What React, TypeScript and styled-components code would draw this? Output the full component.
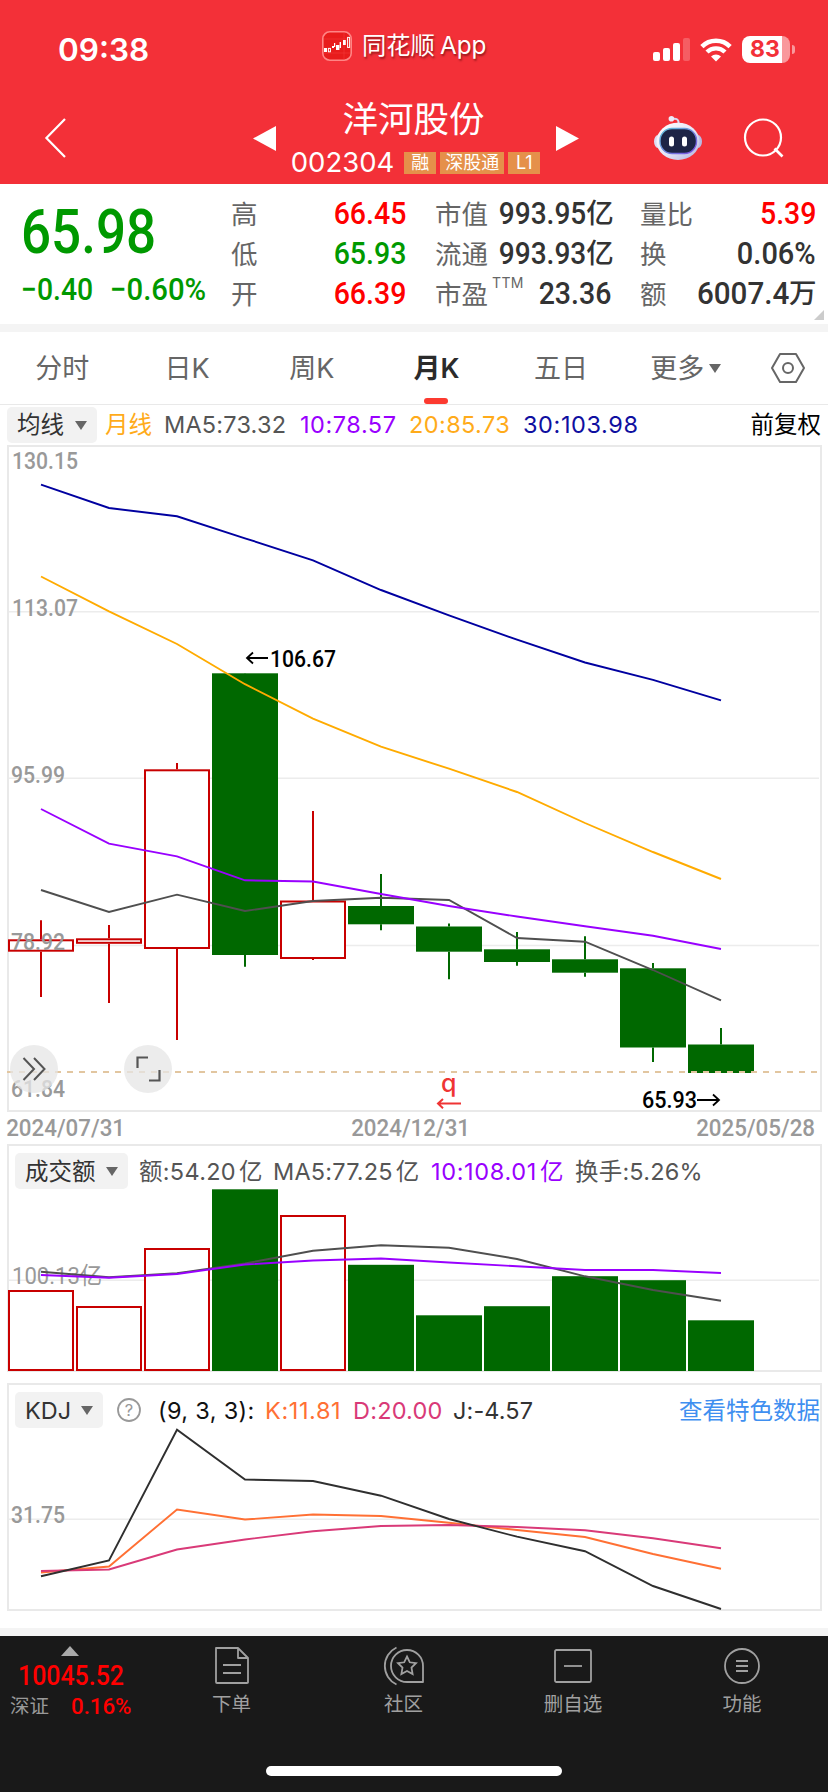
import React from 'react';
import styled, { createGlobalStyle } from 'styled-components';

const CJK = '"Noto Sans CJK SC"';
const SANS = `Inter, ${CJK}, sans-serif`;
const NUM = `Roboto, ${CJK}, sans-serif`;

const Global = createGlobalStyle`
  html, body { margin: 0; padding: 0; background: #fff; }
  * { box-sizing: border-box; }
  svg { display: block; overflow: visible; }
`;

const Page = styled.div`
  width: 828px;
  height: 1792px;
  display: flex;
  flex-direction: column;
  font-family: ${SANS};
  line-height: 1;
  white-space: nowrap;
  background: #fff;
  overflow: hidden;
`;

/* Narrow numeric face used for every quote figure */
const Figure = styled.span<{ $size: number; $color?: string; $weight?: number; $origin?: string; $scale?: number }>`
  display: inline-block;
  font-family: ${NUM};
  font-size: ${p => p.$size}px;
  font-weight: ${p => p.$weight ?? 500};
  color: ${p => p.$color ?? '#333'};
  transform: scaleX(${p => p.$scale ?? 0.905});
  transform-origin: ${p => p.$origin ?? 'right'} center;
`;

/* ---------- header ---------- */
const Header = styled.header`
  height: 184px;
  flex: none;
  background: #f33038;
  color: #fff;
`;
const StatusBar = styled.div`
  height: 92px;
  display: grid;
  grid-template-columns: 322px 331px 1fr;
  align-items: center;
  padding-top: 7px;
`;
const Clock = styled.div`
  padding-left: 58px;
  font-size: 31.5px;
  font-weight: 600;
`;
const AppName = styled.div`
  display: flex;
  align-items: center;
  gap: 10px;
  margin-top: -8px;
  font-size: 24.3px;
  text-shadow: 1px 2px 2px rgba(60, 0, 0, 0.5);
`;
const AppWord = styled.span`
  margin-left: 5px;
`;
const StatusIcons = styled.div`
  display: flex;
  align-items: center;
  gap: 10px;
`;
const Battery = styled.div`
  display: flex;
  align-items: center;
  gap: 2px;
`;
const BatteryBody = styled.div`
  width: 48px;
  height: 27px;
  border-radius: 8px;
  background: linear-gradient(90deg, #fff 40px, rgba(255, 255, 255, 0.5) 40px);
  color: #f33038;
  font-size: 23px;
  font-weight: 700;
  line-height: 27px;
  padding-left: 8px;
`;
const BatteryNub = styled.div`
  width: 3px;
  height: 9px;
  border-radius: 0 3px 3px 0;
  background: rgba(255, 255, 255, 0.5);
`;
const NavBar = styled.div`
  height: 92px;
  display: grid;
  grid-template-columns: 253px 24px 278px 99px 128px;
  align-items: center;
`;
const BackSlot = styled.div`
  padding-left: 45px;
`;
const StockTitle = styled.div`
  display: flex;
  flex-direction: column;
  align-items: center;
  padding-right: 1px;
`;
const StockName = styled.div`
  font-size: 35.5px;
  line-height: 46px;
  padding-right: 4px;
  margin: 3px 0 -1px;
`;
const StockMeta = styled.div`
  display: flex;
  align-items: center;
  height: 40px;
  gap: 4px;
`;
const Code = styled.span`
  font-size: 27.5px;
  margin: 1px 6px 0 0;
`;
const Badge = styled.span<{ $w: number }>`
  width: ${p => p.$w}px;
  height: 22px;
  margin-top: 1px;
  background: #e5904a;
  font-size: 18px;
  line-height: 22px;
  text-align: center;
`;
const NavActions = styled.div`
  display: flex;
  align-items: center;
  gap: 41px;
`;

/* ---------- quote ---------- */
const Quote = styled.section`
  position: relative;
  height: 140px;
  flex: none;
  display: grid;
  grid-template-columns: 202px 175px 176px 176px;
  column-gap: 29px;
`;
const PriceBlock = styled.div`
  padding-left: 21px;
`;
const Price = styled.div`
  height: 93px;
  display: flex;
  align-items: center;
  padding-top: 5px;
`;
const Changes = styled.div`
  display: flex;
  align-items: center;
  height: 24px;
  gap: 10px;
`;
const StatColumn = styled.div`
  padding-top: 10px;
`;
const StatRow = styled.div`
  height: 40px;
  display: flex;
  align-items: center;
  justify-content: space-between;
`;
const StatLabel = styled.span`
  font-size: 26.5px;
  color: #666;
  margin-top: 1px;
  display: flex;
`;
const Ttm = styled.sup`
  font-size: 14px;
  line-height: 1;
  letter-spacing: 0.4px;
  margin: -5px 0 0 4px;
`;
const StatValue = styled.span`
  display: flex;
  align-items: center;
`;
const Unit = styled.span`
  font-size: 27.5px;
  font-weight: 500;
  color: #333;
  letter-spacing: -0.5px;
`;
const Corner = styled.i`
  position: absolute;
  right: 4px;
  bottom: 4px;
  border: 5px solid #ccc;
  border-top-color: transparent;
  border-left-color: transparent;
`;
const Strip = styled.div`
  height: 8px;
  flex: none;
  background: #f4f4f4;
`;

/* ---------- tabs ---------- */
const Tabs = styled.nav`
  height: 73px;
  flex: none;
  display: flex;
  border-bottom: 1px solid #e9e9e9;
`;
const Tab = styled.div<{ $on?: boolean }>`
  position: relative;
  width: 124.7px;
  height: 72px;
  display: flex;
  align-items: center;
  justify-content: center;
  gap: 5px;
  font-size: 27px;
  color: ${p => (p.$on ? '#2b2b2b' : '#666')};
  font-weight: ${p => (p.$on ? 600 : 400)};
  &::after {
    content: '';
    display: ${p => (p.$on ? 'block' : 'none')};
    position: absolute;
    left: 50%;
    bottom: 0;
    width: 24px;
    height: 6px;
    margin-left: -12px;
    border-radius: 3px;
    background: #fc3a30;
  }
`;
const SettingsTab = styled.div`
  flex: 1;
  height: 72px;
  display: flex;
  align-items: center;
  justify-content: center;
`;
const Caret = styled.i`
  width: 0;
  height: 0;
  border: 6px solid transparent;
  border-top: 9px solid #666;
  border-bottom: 0;
`;

/* ---------- indicator rows ---------- */
const Legend = styled.div<{ $h: number; $pl: number; $pr?: number; $pt?: number; $drop?: number }>`
  height: ${p => p.$h}px;
  flex: none;
  display: flex;
  align-items: center;
  padding: ${p => p.$pt ?? 0}px ${p => p.$pr ?? 0}px 0 ${p => p.$pl}px;
  font-size: 23.5px;
  & > :not(svg) { padding-top: ${p => p.$drop ?? 0}px; }
`;
const Picker = styled.div<{ $w: number }>`
  width: ${p => p.$w}px;
  height: 36px;
  border-radius: 5px;
  background: #f2f2f2;
  color: #333;
  display: flex;
  align-items: center;
  justify-content: space-between;
  padding: 0 10px;
  flex: none;
`;
const Item = styled.span<{ $c: string; $ml?: number; $w?: number; $ls?: number }>`
  color: ${p => p.$c};
  margin-left: ${p => p.$ml ?? 0}px;
  width: ${p => (p.$w ? p.$w + 'px' : 'auto')};
  letter-spacing: ${p => p.$ls ?? 0}px;
  flex: none;
`;
const Yi = styled.span`
  margin-left: 3px;
`;
const Push = styled.span`
  margin-left: auto;
  color: #000;
  font-size: 23.5px;
`;
const Link = styled(Push)`
  color: #3f8ff0;
`;

/* ---------- panels ---------- */
const Panel = styled.section<{ $h: number }>`
  position: relative;
  width: 815px;
  height: ${p => p.$h}px;
  flex: none;
  margin-left: 7px;
  border: 2px solid #e9e9e9;
`;
const Dates = styled.div`
  height: 32px;
  flex: none;
  display: flex;
  align-items: center;
  justify-content: space-between;
  padding: 2px 14px 0 7px;
`;
const DateText = styled.span`
  width: 117px;
  display: flex;
  justify-content: center;
`;
const Gap = styled.div<{ $h: number }>`
  height: ${p => p.$h}px;
  flex: none;
`;
const FloatButtons = styled.div`
  position: absolute;
  left: 1px;
  bottom: 17px;
  display: flex;
  gap: 66px;
`;
const RoundButton = styled.div`
  width: 48px;
  height: 48px;
  border-radius: 50%;
  background: rgba(230, 230, 230, 0.76);
  display: flex;
  align-items: center;
  justify-content: center;
`;

/* ---------- bottom bar ---------- */
const Bottom = styled.footer`
  height: 156px;
  flex: none;
  background: #191919;
  display: flex;
  flex-direction: column;
  align-items: center;
`;
const BottomRow = styled.div`
  width: 828px;
  height: 130px;
  display: grid;
  grid-template-columns: 146px 171px 173px 166px 172px;
`;
const IndexBox = styled.div`
  display: flex;
  flex-direction: column;
  padding-top: 10px;
`;
const UpMark = styled.i`
  width: 0;
  margin-left: 61px;
  border: 9px solid transparent;
  border-bottom: 10px solid #aaa;
  border-top: 0;
`;
const IndexValue = styled.div`
  height: 39px;
  display: flex;
  align-items: center;
  padding-left: 18px;
`;
const IndexMeta = styled.div`
  display: flex;
  align-items: center;
  height: 24px;
  padding-left: 10px;
  gap: 22px;
  font-size: 19.5px;
  color: #999;
`;
const Action = styled.div`
  display: flex;
  flex-direction: column;
  align-items: center;
  padding-top: 10px;
  gap: 9px;
  font-size: 19.5px;
  color: #a0a0a0;
`;
const HomeBar = styled.div`
  width: 296px;
  height: 10px;
  border-radius: 5px;
  background: #fff;
`;

/* ---------- data ---------- */
const STEP = 68;
const cx = (i: number) => 41 + STEP * i;
const line = (ys: number[]) => ys.map((y, i) => `${cx(i)},${y}`).join(' ');

type Candle = { up?: boolean; hi: number; lo: number; top: number; bottom: number };
const candles: Candle[] = [
  { up: true, hi: 920.3, lo: 997, top: 939.3, bottom: 951.7 },
  { up: true, hi: 925, lo: 1003, top: 938.3, bottom: 943.8 },
  { up: true, hi: 763, lo: 1040, top: 769.3, bottom: 949 },
  { hi: 673, lo: 966.7, top: 673.3, bottom: 955 },
  { up: true, hi: 811, lo: 960, top: 900.5, bottom: 959 },
  { hi: 874, lo: 930.3, top: 906, bottom: 924.3 },
  { hi: 923.5, lo: 979.3, top: 926.5, bottom: 951.7 },
  { hi: 932, lo: 965.7, top: 949.3, bottom: 962 },
  { hi: 936.3, lo: 976.7, top: 959.3, bottom: 972.7 },
  { hi: 963, lo: 1062, top: 968.3, bottom: 1047.5 },
  { hi: 1028, lo: 1045, top: 1044.5, bottom: 1073 },
];
const volumes = [1290, 1306, 1248, 1189.3, 1215, 1264.8, 1315.3, 1306.2, 1276.2, 1280.2, 1320.3];

const ma30 = [484.7, 508, 516.3, 538.3, 560.3, 590, 615.3, 639.7, 662.5, 679.8, 700.3];
const ma20 = [576.5, 611.3, 644, 684.2, 718.7, 746.7, 768.7, 792, 823, 852, 879];
const ma10 = [809, 843.7, 856.3, 880.3, 881.5, 894, 906, 916.5, 926.3, 935.7, 949];
const ma5 = [890, 912, 894.7, 911, 901, 897.7, 900, 938, 941.7, 970, 1000.3];
const vol5 = [1271.7, 1277.3, 1273.3, 1263.5, 1250.7, 1245.3, 1247.7, 1259, 1276.3, 1290, 1300.7];
const vol10 = [1275, 1277.7, 1274, 1264.5, 1260.5, 1258.5, 1262.5, 1266.3, 1270, 1270, 1273];
const kdjJ = [1576.3, 1560.5, 1429.7, 1479.5, 1481, 1495.7, 1519, 1536.7, 1551.2, 1586, 1609];
const kdjK = [1572.5, 1566.5, 1509.5, 1519.5, 1514.5, 1516, 1522.8, 1530, 1537, 1554, 1568.7];
const kdjD = [1571, 1569.5, 1549.5, 1539.5, 1531.2, 1526, 1525, 1527, 1530.3, 1538.3, 1548.3];

const RED = '#c80000';
const GREEN = '#006800';

const Series = ({ ys, color }: { ys: number[]; color: string }) => (
  <polyline points={line(ys)} fill="none" stroke={color} strokeWidth="1.9" />
);

const Body = ({ i, top, bottom, up }: { i: number; top: number; bottom: number; up?: boolean }) =>
  up ? (
    <rect x={9 + STEP * i} y={top + 1} width="64" height={bottom - top - 2} fill="#fff" stroke={RED} strokeWidth="2" />
  ) : (
    <rect x={8 + STEP * i} y={top} width="66" height={bottom - top} fill={GREEN} />
  );

const AxisText = ({ x, y, w, children, color = '#999', weight = 500 }: {
  x: number; y: number; w: number; children: React.ReactNode; color?: string; weight?: number;
}) => (
  <text x={x} y={y} textLength={w} lengthAdjust="spacingAndGlyphs" fontFamily={NUM} fontSize="23.5" fontWeight={weight} fill={color}>
    {children}
  </text>
);

const Grid = ({ y }: { y: number }) => <line x1="9" x2="819" y1={y} y2={y} stroke="#ececec" strokeWidth="1.4" />;

const PriceChart = () => (
  <svg width="811" height="663" viewBox="9 447 811 663">
    {[611.7, 778.3, 945.5].map(y => <Grid key={y} y={y} />)}
    {candles.map((c, i) => (
      <g key={i}>
        <path d={`M${cx(i)} ${c.hi}V${c.top}M${cx(i)} ${c.bottom}V${c.lo}`} stroke={c.up ? RED : GREEN} strokeWidth="2" />
        <Body i={i} {...c} />
      </g>
    ))}
    <line x1="7" x2="818" y1="1072" y2="1072" stroke="#e2c6a0" strokeWidth="2" strokeDasharray="6 6" />
    <Series ys={ma5} color="#4f4f4f" />
    <Series ys={ma10} color="#9900ff" />
    <Series ys={ma20} color="#ffab00" />
    <Series ys={ma30} color="#0000a0" />
    <AxisText x={12} y={469} w={66}>130.15</AxisText>
    <AxisText x={12} y={616} w={66}>113.07</AxisText>
    <AxisText x={11} y={782.7} w={54}>95.99</AxisText>
    <AxisText x={11} y={950} w={54}>78.92</AxisText>
    <AxisText x={11} y={1096.7} w={54}>61.84</AxisText>
    <path d="M268 658H247M253 652.5L247 658L253 663.5" fill="none" stroke="#000" strokeWidth="1.8" />
    <AxisText x={270} y={666.7} w={66} color="#000">106.67</AxisText>
    <AxisText x={642} y={1108} w={55} color="#000">65.93</AxisText>
    <path d="M697 1100H719M713 1094.5L719 1100L713 1105.5" fill="none" stroke="#000" strokeWidth="1.8" />
    <text x="441" y="1092" fontFamily={SANS} fontSize="25" fontWeight="500" fill="#ef3434">q</text>
    <path d="M461 1103.6H438M443 1099L438 1103.6L443 1108.2" fill="none" stroke="#ef3434" strokeWidth="2" />
  </svg>
);

const VolumeChart = () => (
  <svg width="811" height="182" viewBox="9 1189 811 182">
    <Grid y={1280.3} />
    {volumes.map((y, i) => <Body key={i} i={i} top={y} bottom={1371} up={candles[i].up} />)}
    <AxisText x={12} y={1283.7} w={90} weight={400}>100.13亿</AxisText>
    <Series ys={vol5} color="#4f4f4f" />
    <Series ys={vol10} color="#9900ff" />
  </svg>
);

const KdjChart = () => (
  <svg width="811" height="181" viewBox="9 1428 811 181">
    <Grid y={1519.3} />
    <AxisText x={11} y={1523.3} w={54}>31.75</AxisText>
    <Series ys={kdjK} color="#ff7034" />
    <Series ys={kdjD} color="#d93a78" />
    <Series ys={kdjJ} color="#2f2f2f" />
  </svg>
);

/* ---------- icons ---------- */
const AppIcon = () => (
  <svg width="30" height="30" viewBox="0 0 30 30">
    <rect x="0.8" y="0.8" width="28.4" height="28.4" rx="7" fill="#e81c1c" stroke="#ff8585" strokeWidth="1.6" />
    <path d="M2 8H28M2 22H28M22 2V28" stroke="#f23a3a" strokeWidth="0.6" />
    <g fill="#fff">
      <rect x="2" y="17" width="3" height="4" />
      <rect x="10" y="15" width="2" height="2" />
      <rect x="12" y="12" width="1.2" height="4" />
      <rect x="14" y="14" width="3.4" height="5" />
      <rect x="17.6" y="11" width="1.4" height="6" />
      <rect x="21" y="9" width="2.8" height="5" />
    </g>
    <rect x="6.4" y="17.4" width="2" height="3.4" fill="none" stroke="#fff" />
    <rect x="25.6" y="6.4" width="2" height="10" fill="none" stroke="#fff" />
  </svg>
);
const Signal = () => (
  <svg width="37" height="23" viewBox="0 0 37 23" fill="#fff">
    <rect x="0" y="14" width="7" height="9" rx="2" />
    <rect x="10" y="10" width="7" height="13" rx="2" />
    <rect x="20" y="5" width="7" height="18" rx="2" />
    <rect x="30" y="0" width="7" height="23" rx="2" opacity="0.22" />
  </svg>
);
const Wifi = () => (
  <svg width="32" height="24" viewBox="0 0 32 24">
    <path d="M1.9 8.6A20 20 0 0 1 30.1 8.6" fill="none" stroke="#fff" strokeWidth="4.6" />
    <path d="M7 14A13 13 0 0 1 25 14" fill="none" stroke="#fff" strokeWidth="4.4" />
    <path d="M16 23.5L11 18.6A7.2 7.2 0 0 1 21 18.6Z" fill="#fff" />
  </svg>
);
const Robot = () => (
  <svg width="48" height="44" viewBox="0 0 48 44">
    <defs>
      <linearGradient id="shell" x1="0" y1="0" x2="1" y2="1">
        <stop offset="0" stopColor="#ffffff" />
        <stop offset="0.55" stopColor="#e4e4f7" />
        <stop offset="1" stopColor="#aeb0dc" />
      </linearGradient>
      <linearGradient id="rim" x1="0" y1="0" x2="1" y2="1">
        <stop offset="0" stopColor="#62c4da" />
        <stop offset="1" stopColor="#7a4be0" />
      </linearGradient>
    </defs>
    <path d="M18 3C22 2 25 3 24.6 8" fill="none" stroke="#d9d9f2" strokeWidth="2" />
    <circle cx="17.4" cy="2.8" r="2.8" fill="#eceaf8" />
    <ellipse cx="4" cy="25.5" rx="4" ry="6.5" fill="#dcdcf2" />
    <ellipse cx="44" cy="25.5" rx="4" ry="6.5" fill="#b9b9e2" />
    <ellipse cx="24" cy="25.3" rx="21.5" ry="18.6" fill="url(#shell)" />
    <rect x="6" y="12.5" width="36.5" height="25" rx="12" fill="#1d2446" stroke="url(#rim)" strokeWidth="1.4" />
    <rect x="15" y="20.5" width="5" height="10" rx="2.5" fill="#fff" />
    <rect x="28" y="20.5" width="5" height="10" rx="2.5" fill="#fff" />
  </svg>
);
const Search = () => (
  <svg width="40" height="40" viewBox="0 0 40 40" fill="none" stroke="#fff" strokeWidth="2.2">
    <circle cx="20" cy="19.5" r="18" />
    <path d="M31.5 30.5L39.5 38.5" strokeWidth="2.6" />
  </svg>
);

const Stat = ({ label, ttm, value, unit, color, scale }: {
  label: string; ttm?: boolean; value: string; unit?: string; color?: string; scale?: number;
}) => (
  <StatRow>
    <StatLabel>{label}{ttm && <Ttm>TTM</Ttm>}</StatLabel>
    <StatValue>
      <Figure $size={31.5} $color={color} $scale={scale}>{value}</Figure>
      {unit && <Unit>{unit}</Unit>}
    </StatValue>
  </StatRow>
);

const DateLabel = ({ children }: { children: string }) => (
  <DateText>
    <Figure $size={23.5} $color="#999" $origin="center" $scale={0.95}>{children}</Figure>
  </DateText>
);

export default function App() {
  return (
    <Page>
      <Global />
      <Header>
        <StatusBar>
          <Clock>09:38</Clock>
          <AppName><AppIcon /><span>同花顺<AppWord>App</AppWord></span></AppName>
          <StatusIcons>
            <Signal />
            <Wifi />
            <Battery><BatteryBody>83</BatteryBody><BatteryNub /></Battery>
          </StatusIcons>
        </StatusBar>
        <NavBar>
          <BackSlot>
            <svg width="21" height="40" viewBox="0 0 21 40"><path d="M20 1L1.4 20L20 39" fill="none" stroke="#fff" strokeWidth="2.2" /></svg>
          </BackSlot>
          <svg width="23" height="25" viewBox="0 0 23 25"><path d="M0 12.5L23 0V25Z" fill="#fff" /></svg>
          <StockTitle>
            <StockName>洋河股份</StockName>
            <StockMeta>
              <Code>002304</Code>
              <Badge $w={32}>融</Badge>
              <Badge $w={64}>深股通</Badge>
              <Badge $w={32}>L1</Badge>
            </StockMeta>
          </StockTitle>
          <svg width="24" height="25" viewBox="-1 0 24 25"><path d="M23 12.5L0 0V25Z" fill="#fff" /></svg>
          <NavActions><Robot /><Search /></NavActions>
        </NavBar>
      </Header>

      <Quote>
        <PriceBlock>
          <Price><Figure $size={60.5} $color="#009900" $origin="left" $scale={0.875}>65.98</Figure></Price>
          <Changes>
            <Figure $size={31} $color="#009900" $origin="left" $scale={0.915}>−0.40</Figure>
            <Figure $size={31} $color="#009900" $origin="left" $scale={0.945}>−0.60%</Figure>
          </Changes>
        </PriceBlock>
        <StatColumn>
          <Stat label="高" value="66.45" color="#ff0000" />
          <Stat label="低" value="65.93" color="#009900" />
          <Stat label="开" value="66.39" color="#ff0000" />
        </StatColumn>
        <StatColumn>
          <Stat label="市值" value="993.95" unit="亿" scale={0.89} />
          <Stat label="流通" value="993.93" unit="亿" scale={0.89} />
          <Stat label="市盈" ttm value="23.36" />
        </StatColumn>
        <StatColumn>
          <Stat label="量比" value="5.39" color="#ff0000" />
          <Stat label="换" value="0.06%" scale={0.92} />
          <Stat label="额" value="6007.4" unit="万" scale={0.94} />
        </StatColumn>
        <Corner />
      </Quote>
      <Strip />

      <Tabs>
        <Tab>分时</Tab>
        <Tab>日K</Tab>
        <Tab>周K</Tab>
        <Tab $on>月K</Tab>
        <Tab>五日</Tab>
        <Tab>更多<Caret /></Tab>
        <SettingsTab>
          <svg width="34" height="30" viewBox="0 0 34 30" fill="none" stroke="#666" strokeWidth="2">
            <path d="M9 1H25L33 15L25 29H9L1 15Z" strokeLinejoin="round" />
            <circle cx="17" cy="15" r="5" />
          </svg>
        </SettingsTab>
      </Tabs>

      <Legend $h={40} $pl={7} $pr={7}>
        <Picker $w={90}>均线<Caret /></Picker>
        <Item $c="#ffab1a" $ml={8} $w={59}>月线</Item>
        <Item $c="#555" $w={136} $ls={0.2}>MA5:73.32</Item>
        <Item $c="#9900ff" $w={109} $ls={0.55}>10:78.57</Item>
        <Item $c="#ffab1a" $w={114} $ls={0.4}>20:85.73</Item>
        <Item $c="#0f0fa0" $ls={0.6}>30:103.98</Item>
        <Push>前复权</Push>
      </Legend>

      <Panel $h={667}>
        <PriceChart />
        <FloatButtons>
          <RoundButton>
            <svg width="24" height="24" viewBox="0 0 24 24" fill="none" stroke="#555" strokeWidth="2"><path d="M1.5 1L12 12L1.5 23M12 1L22.5 12L12 23" /></svg>
          </RoundButton>
          <RoundButton>
            <svg width="25" height="26" viewBox="0 0 25 26" fill="none" stroke="#555" strokeWidth="2.2"><path d="M1.5 12V1.5H12M23.5 14V24.5H13" /></svg>
          </RoundButton>
        </FloatButtons>
      </Panel>
      <Dates>
        <DateLabel>2024/07/31</DateLabel>
        <DateLabel>2024/12/31</DateLabel>
        <DateLabel>2025/05/28</DateLabel>
      </Dates>

      <Panel $h={228}>
        <Legend $h={43} $pl={6} $pt={6} $drop={2}>
          <Picker $w={113}>成交额<Caret /></Picker>
          <Item $c="#555" $ml={11} $w={134} $ls={0.3}>额:54.20<Yi>亿</Yi></Item>
          <Item $c="#555" $w={158} $ls={0.2}>MA5:77.25<Yi>亿</Yi></Item>
          <Item $c="#9900ff" $w={144} $ls={0.65}>10:108.01<Yi>亿</Yi></Item>
          <Item $c="#555" $ls={0.2}>换手:5.26%</Item>
        </Legend>
        <VolumeChart />
      </Panel>
      <Gap $h={11} />
      <Panel $h={228}>
        <Legend $h={43} $pl={6} $pt={6} $drop={2}>
          <Picker $w={88}>KDJ<Caret /></Picker>
          <svg width="24" height="24" viewBox="0 0 24 24" style={{ marginLeft: 14, flex: 'none' }}>
            <circle cx="12" cy="12" r="11" fill="none" stroke="#999" strokeWidth="1.8" />
            <text x="12" y="18" textAnchor="middle" fontFamily="Inter" fontSize="16.5" fill="#999">?</text>
          </svg>
          <Item $c="#111" $ml={17} $w={107} $ls={0.35}>(9, 3, 3):</Item>
          <Item $c="#ff7034" $w={88} $ls={0.6}>K:11.81</Item>
          <Item $c="#d93a78" $w={100} $ls={0.2}>D:20.00</Item>
          <Item $c="#333" $ls={0.1}>J:-4.57</Item>
          <Link>查看特色数据</Link>
        </Legend>
        <KdjChart />
      </Panel>
      <Gap $h={17} />
      <Strip />

      <Bottom>
        <BottomRow>
          <IndexBox>
            <UpMark />
            <IndexValue><Figure $size={27.5} $color="#ff0000" $origin="left">10045.52</Figure></IndexValue>
            <IndexMeta>深证<Figure $size={22.7} $color="#ff0000" $origin="left" $scale={0.98}>0.16%</Figure></IndexMeta>
          </IndexBox>
          <Action>
            <svg width="38" height="40" viewBox="0 0 38 40" fill="none" stroke="#a0a0a0" strokeWidth="1.8">
              <path d="M3 2H25L35 12V36.5Q35 37 34 37H4Q3 37 3 36Z M25 2V12H35M10 19H28M10 27H28" strokeLinejoin="round" />
            </svg>
            下单
          </Action>
          <Action>
            <svg width="40" height="40" viewBox="0 0 40 40" fill="none" stroke="#a0a0a0" strokeWidth="1.8">
              <path d="M39 36H23A16 16 0 1 1 39 20Z" strokeLinejoin="round" />
              <path d="M12.5 1.5A20.5 20.5 0 0 0 12.5 38.5" />
              <path d="M23 10.5L25.8 16.3L32 17.2L27.5 21.6L28.6 28L23 25L17.4 28L18.5 21.6L14 17.2L20.2 16.3Z" />
            </svg>
            社区
          </Action>
          <Action>
            <svg width="38" height="40" viewBox="0 0 38 40" fill="none" stroke="#a0a0a0" strokeWidth="1.8">
              <rect x="1" y="4" width="36" height="32" rx="1.5" />
              <path d="M10 20H28" />
            </svg>
            删自选
          </Action>
          <Action>
            <svg width="38" height="40" viewBox="0 0 38 40" fill="none" stroke="#a0a0a0" strokeWidth="1.8">
              <circle cx="19" cy="20" r="17" />
              <path d="M13 15H25M13 20H25M13 25H25" />
            </svg>
            功能
          </Action>
        </BottomRow>
        <HomeBar />
      </Bottom>
    </Page>
  );
}
